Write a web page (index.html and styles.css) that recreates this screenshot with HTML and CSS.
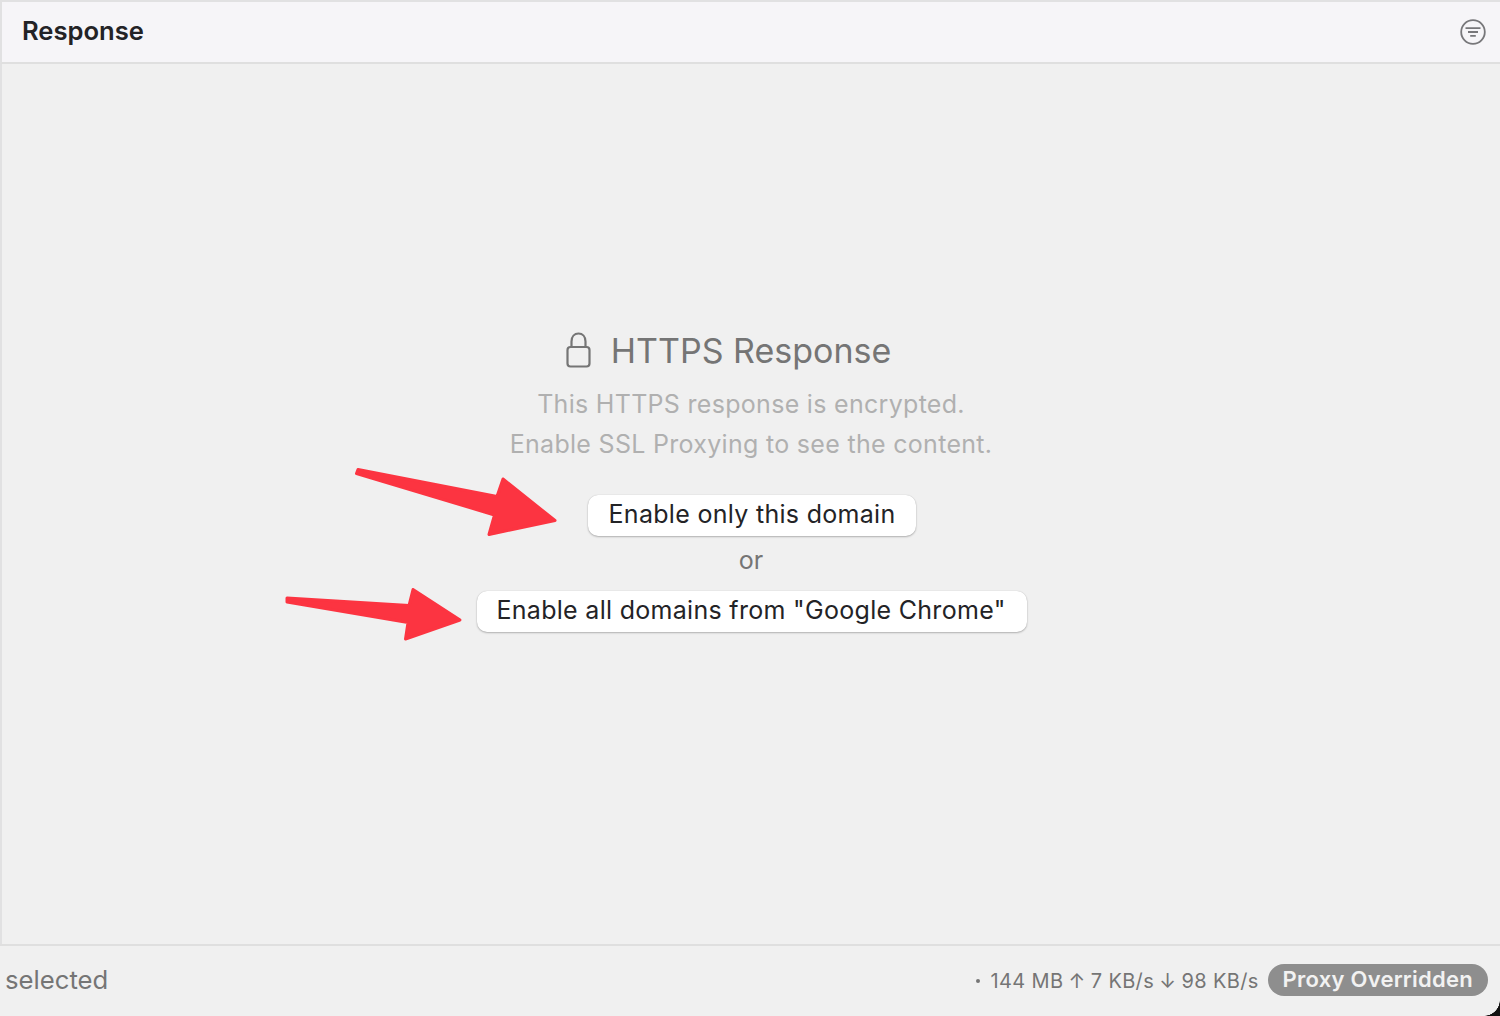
FILE: index.html
```html
<!DOCTYPE html>
<html lang="en">
<head>
<meta charset="utf-8">
<title>HTTPS Response</title>
<link rel="stylesheet" href="styles.css">
</head>
<body>
<div class="window">
  <header class="header">
    <h1 class="header-title">Response</h1>
    <svg class="filter-icon" viewBox="0 0 26 26" aria-hidden="true">
      <circle cx="13" cy="13" r="11.8"/>
      <path d="M5.500 9.200H20.500M8 13H18M10.200 16.800H15.800"/>
    </svg>
  </header>
  <main class="main">
    <div class="title-row">
      <svg class="lock-icon" viewBox="0 0 26 36" aria-hidden="true">
        <rect x="1.500" y="15" width="22" height="19.500" rx="3"/>
        <path d="M5.500 15V9.500C5.500 4.500 8.500 1.500 12.500 1.500C16.500 1.500 19.500 4.500 19.500 9.500V15"/>
      </svg>
      <h2 class="title">HTTPS Response</h2>
    </div>
    <p class="desc">This HTTPS response is encrypted.<br>Enable SSL Proxying to see the content.</p>
    <button class="btn btn-first">Enable only this domain</button>
    <div class="or">or</div>
    <button class="btn btn-wide">Enable all domains from "Google Chrome"</button>
  </main>
  <footer class="footer">
    <span class="selected">selected</span>
    <div class="status">
      <span class="stats"><span class="dot"></span>144 MB <span class="arrow">↑</span> 7 KB/s <span class="arrow">↓</span> 98 KB/s</span>
      <span class="pill">Proxy Overridden</span>
    </div>
  </footer>
  <svg class="annotations" viewBox="0 0 1500 1016" aria-hidden="true">
    <path d="M358 469.500L497 496.500L503 479L555 520.500L489 534.500L494.500 515L356.500 473.500Z"/>
    <path d="M287 598L409 605.500L413 589.500L460 620L405.500 639L408 622.500L287 602Z"/>
  </svg>
  <div class="corner"></div>
</div>
</body>
</html>
```
FILE: styles.css
```css
* { box-sizing: border-box; }
html, body { margin: 0; padding: 0; }
body {
  width: 1500px;
  height: 1016px;
  overflow: hidden;
  background: #f0f0f0;
  font-family: Inter, "Liberation Sans", sans-serif;
}
.window {
  position: relative;
  width: 1500px;
  height: 1016px;
  display: flex;
  flex-direction: column;
  background: #f0f0f0;
}
.header {
  height: 64px;
  flex: none;
  display: flex;
  align-items: center;
  justify-content: space-between;
  padding: 0 14px 0 20px;
  background: #f6f5f8;
  border-top: 2px solid #e1e1e2;
  border-left: 2px solid #e1e1e2;
  border-bottom: 2px solid #dfdfdf;
}
.header-title {
  margin: -4px 0 0;
  font-size: 25.600px;
  font-weight: 600;
  color: #232326;
}
.filter-icon {
  width: 26px;
  height: 26px;
  fill: none;
  stroke: #77777a;
  stroke-width: 1.800;
}
.main {
  flex: 1;
  display: flex;
  flex-direction: column;
  align-items: center;
  padding-top: 263px;
  border-left: 2px solid #e1e1e2;
}
.title-row {
  display: flex;
  align-items: center;
  height: 46px;
}
.lock-icon {
  width: 26px;
  height: 36px;
  margin: 0 19px 0 -45px;
  fill: none;
  stroke: #757575;
  stroke-width: 2.200;
}
.title {
  margin: 0;
  font-size: 34px;
  font-weight: 400;
  color: #757575;
}
.desc {
  margin: 11px 0 0;
  font-size: 25px;
  line-height: 40px;
  letter-spacing: .3px;
  text-align: center;
  color: #b0b0b0;
}
.btn {
  height: 41px;
  margin-left: 2px;
  padding: 0 20px 3px;
  border: 0;
  border-radius: 10px;
  background: #fff;
  box-shadow: 0 1px 2px rgba(0, 0, 0, .25), 0 0 1px rgba(0, 0, 0, .2);
  font-family: inherit;
  font-size: 25px;
  letter-spacing: .3px;
  color: #232326;
}
.btn-first { margin-top: 31px; }
.btn-wide { padding: 0 21px 3px 19px; }
.or {
  height: 55px;
  line-height: 48px;
  font-size: 25px;
  color: #757575;
}
.footer {
  height: 72px;
  flex: none;
  display: flex;
  align-items: center;
  justify-content: space-between;
  padding: 0 12px 2px 5px;
  border-top: 2px solid #dfdfdf;
}
.selected {
  margin-top: -1px;
  font-size: 25.700px;
  color: #757575;
}
.status {
  display: flex;
  align-items: center;
  gap: 9px;
}
.stats {
  display: flex;
  align-items: center;
  margin-top: 2px;
  font-size: 20px;
  letter-spacing: .35px;
  white-space: pre;
  color: #757575;
}
.arrow { margin: 0 -.800px; }
.dot {
  width: 4px;
  height: 4px;
  margin-right: 11px;
  border-radius: 50%;
  background: #757575;
}
.pill {
  height: 32px;
  line-height: 30px;
  padding: 0 15px;
  border-radius: 16px;
  background: #8e8e8e;
  color: #f2f2f2;
  font-size: 22px;
  letter-spacing: .25px;
  font-weight: 600;
}
.annotations {
  position: absolute;
  inset: 0;
  width: 1500px;
  height: 1016px;
  pointer-events: none;
  fill: #fc3441;
  stroke: #fc3441;
  stroke-width: 3;
  stroke-linejoin: round;
}
.corner {
  position: absolute;
  right: 0;
  bottom: 0;
  width: 16px;
  height: 16px;
  background: radial-gradient(circle at 0 0, transparent 15.500px, #111 16px);
}
```
